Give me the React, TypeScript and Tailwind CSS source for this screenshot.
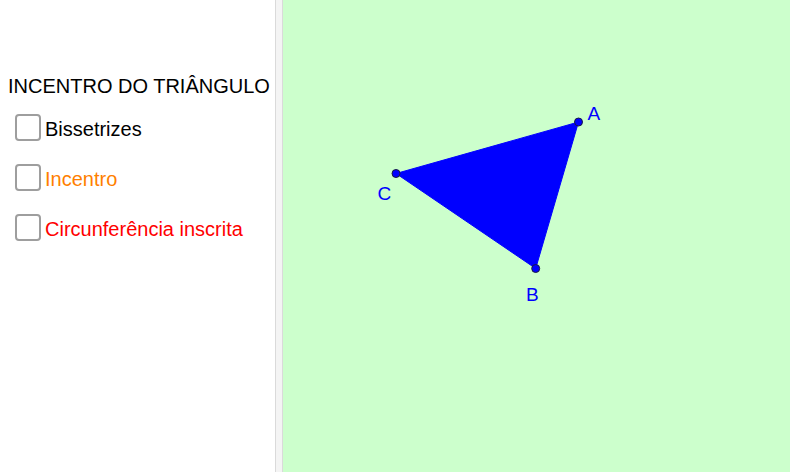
import React from 'react';

const options = [
  { label: 'Bissetrizes', color: 'text-black' },
  { label: 'Incentro', color: 'text-[#ff7f00]' },
  { label: 'Circunferência inscrita', color: 'text-[#ff0000]' },
];

export default function App() {
  return (
    <div className="flex h-[472px] w-[790px] overflow-hidden bg-white font-['Liberation_Sans',Arial,sans-serif]">
      {/* Algebra / controls panel */}
      <div className="flex w-[275px] shrink-0 flex-col pt-[74px]">
        <div className="pl-2 text-[20px] leading-6 text-black whitespace-nowrap">INCENTRO DO TRIÂNGULO</div>
        <div className="mt-4 flex flex-col gap-[23px] pl-[15px]">
          {options.map((o) => (
            <div key={o.label} className="flex items-start gap-1">
              <span className="h-[27px] w-[26px] shrink-0 rounded-[4px] border-2 border-[#9e9e9e] bg-white" />
              <span className={`mt-[3px] text-[20px] leading-6 whitespace-nowrap ${o.color}`}>{o.label}</span>
            </div>
          ))}
        </div>
      </div>

      {/* Splitter */}
      <div className="w-2 shrink-0 border-x border-[#dadada] bg-[#f4f4f4]" />

      {/* Graphics view */}
      <div className="flex-1 bg-[#ccffcc]">
        <svg width="507" height="472" viewBox="283 0 507 472" className="block">
          <polygon points="578.5,122 535.7,268.5 396,173.5" fill="#0000ff" stroke="#0000ff" strokeWidth="1" />
          <g fill="#0000ff" stroke="#1a1a40" strokeWidth="1">
            <circle cx="578.5" cy="122" r="4" />
            <circle cx="535.7" cy="268.5" r="4" />
            <circle cx="396" cy="173.5" r="4" />
          </g>
          <g fill="#0000ff" fontSize="19" fontFamily="'Liberation Sans', Arial, sans-serif">
            <text x="587.5" y="119.5">A</text>
            <text x="526" y="300.5">B</text>
            <text x="377.5" y="199.5">C</text>
          </g>
        </svg>
      </div>
    </div>
  );
}
